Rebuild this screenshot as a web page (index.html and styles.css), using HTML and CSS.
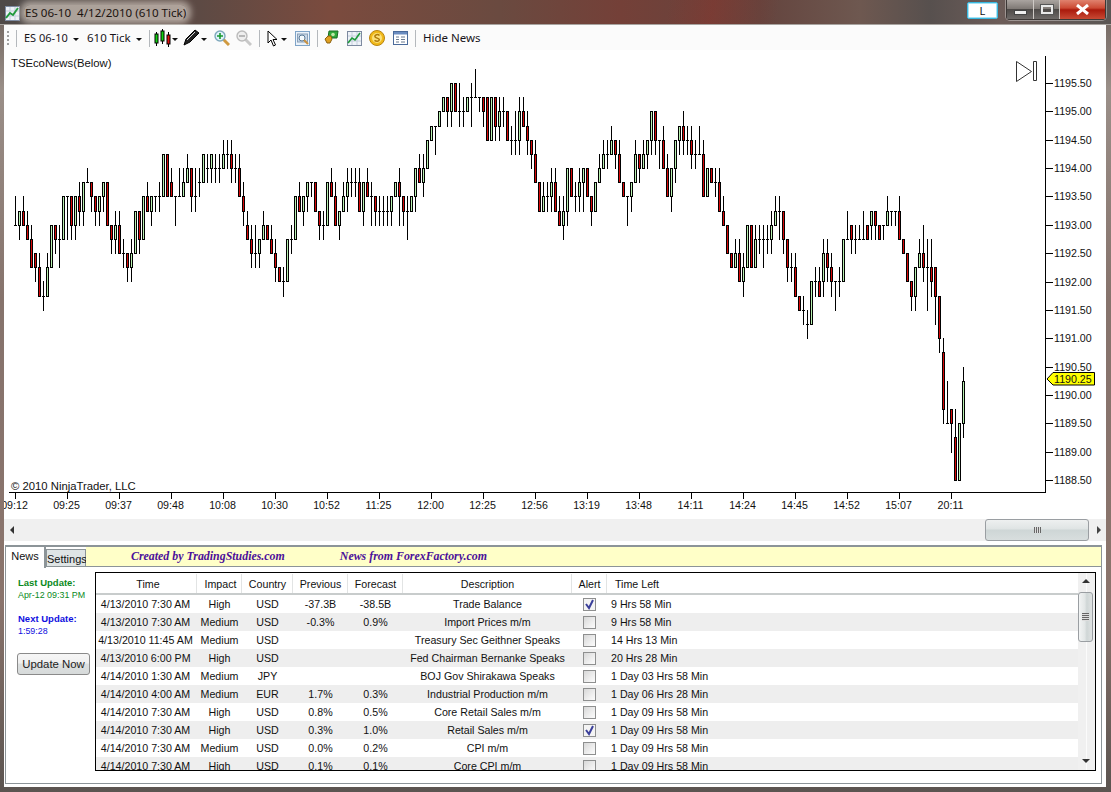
FILE: index.html
```html
<!DOCTYPE html>
<html lang="en">
<head>
    <meta charset="UTF-8">
    <title>ES 06-10 4/12/2010 (610 Tick)</title>
    <link rel="stylesheet" href="styles.css">
</head>
<body>
    <div class="window">
        <div class="titlebar">
            <svg class="app-icon" width="15" height="15" viewBox="0 0 15 15">
                <rect x="0.5" y="0.5" width="14" height="14" fill="#eef2f8" stroke="#7d8aa0"/>
                <path d="M1 5h13M1 10h13M5 1v13M10 1v13" stroke="#c4cedc"/>
                <path d="M1 12l4-5 3 2 5-7" fill="none" stroke="#1f9a3c" stroke-width="2"/>
            </svg>
            <span class="title-text">ES 06-10&nbsp; 4/12/2010 (610 Tick)</span>
            <span class="title-l">L</span>
            <div class="caption-buttons">
                <span class="cap cap-min"><i></i></span>
                <span class="cap cap-max"><i></i></span>
                <span class="cap cap-close">
                    <svg width="15" height="11" viewBox="0 0 15 11"><path d="M2 1l11 9M13 1L2 10" stroke="#fff" stroke-width="3"/></svg>
                </span>
            </div>
        </div>

        <div class="toolbar">
            <span class="grip"></span>
            <span class="sep sep-first"></span>
            <span class="tb-text tb-es">ES 06-10</span>
            <span class="caret caret-es"></span>
            <span class="tb-text tb-tick">610 Tick</span>
            <span class="caret caret-tick"></span>
            <span class="sep sep-a"></span>
            <svg class="ic ic-candles" width="17" height="18" viewBox="0 0 17 18">
                <path d="M2.5 3v14M8.500 0v15M14.500 3v15" stroke="#000"/>
                <rect x="1" y="5" width="3" height="9" fill="#10d010" stroke="#000"/>
                <rect x="7" y="2" width="3" height="10" fill="#10d010" stroke="#000"/>
                <rect x="13" y="6" width="3" height="9" fill="#e01010" stroke="#000"/>
            </svg>
            <span class="caret caret-candles"></span>
            <svg class="ic ic-pen" width="17" height="17" viewBox="0 0 17 17">
                <path d="M1 16l2-6L12 1l4 3-9 9z" fill="#222" stroke="#000"/>
                <path d="M4 11l8-8" stroke="#ddd"/>
            </svg>
            <span class="caret caret-pen"></span>
            <svg class="ic ic-zoomin" width="16" height="16" viewBox="0 0 16 16">
                <path d="M9 9l6 6" stroke="#d09a40" stroke-width="3"/>
                <circle cx="6" cy="6" r="5" fill="#dff2fa" stroke="#7fa8bc" stroke-width="1.4"/>
                <path d="M3 6h6M6 3v6" stroke="#1a9a30" stroke-width="1.6"/>
            </svg>
            <svg class="ic ic-zoomout" width="16" height="16" viewBox="0 0 16 16">
                <path d="M9 9l6 6" stroke="#c8c8c8" stroke-width="3"/>
                <circle cx="6" cy="6" r="5" fill="#eee" stroke="#bbb" stroke-width="1.4"/>
                <path d="M3 6h6" stroke="#aaa" stroke-width="1.6"/>
            </svg>
            <span class="sep sep-b"></span>
            <svg class="ic ic-cursor" width="11" height="17" viewBox="0 0 11 17">
                <path d="M1 1v12l3-3 2.500 6 2-1-2.500-5.500H10z" fill="#fff" stroke="#000"/>
            </svg>
            <span class="caret caret-cursor"></span>
            <svg class="ic ic-props" width="15" height="15" viewBox="0 0 15 15">
                <rect x="0.5" y="0.5" width="14" height="14" fill="#eaf2fa" stroke="#7fa4c8"/>
                <rect x="2.500" y="3" width="10" height="8" fill="#c8d8e8" stroke="#8aa0b8"/>
                <circle cx="7" cy="7" r="3" fill="#f4fafd" stroke="#5a7a98"/>
                <path d="M9 9l4 4" stroke="#c89040" stroke-width="2"/>
            </svg>
            <span class="sep sep-c"></span>
            <svg class="ic ic-money" width="15" height="15" viewBox="0 0 15 15">
                <path d="M5 1h9l-1 7H4z" fill="#2fa83a" stroke="#1a6a24"/>
                <circle cx="9" cy="4.500" r="1.800" fill="#bfe8a8"/>
                <path d="M1 9l3-3h3l1 3-2 4H3z" fill="#e0a020" stroke="#8a6010"/>
            </svg>
            <svg class="ic ic-linechart" width="15" height="15" viewBox="0 0 15 15">
                <rect x="0.5" y="0.5" width="14" height="14" fill="#eef2f8" stroke="#7d8aa0"/>
                <path d="M1 5h13M1 10h13M5 1v13M10 1v13" stroke="#c4cedc"/>
                <path d="M1 12l4-5 3 2 5-7" fill="none" stroke="#1f9a3c" stroke-width="1.600"/>
            </svg>
            <svg class="ic ic-coin" width="16" height="16" viewBox="0 0 16 16">
                <circle cx="8" cy="8" r="7.500" fill="#f0b818" stroke="#b88410"/>
                <circle cx="8" cy="8" r="5" fill="#fbe07a"/>
                <path d="M10.500 5.500C9 4 5.500 4.500 6 6.800c.4 1.700 4.500 1 4.300 3-.2 2-3.300 1.800-4.800.6" fill="none" stroke="#b07a08" stroke-width="1.500"/>
            </svg>
            <svg class="ic ic-table" width="15" height="14" viewBox="0 0 15 14">
                <rect x="0.5" y="0.5" width="14" height="13" fill="#fff" stroke="#4a6a9a"/>
                <rect x="1" y="1" width="13" height="2.500" fill="#6a8cc0"/>
                <path d="M3 6h3M3 8.500h3M3 11h3M8 6h4M8 8.500h4M8 11h4" stroke="#6a7a90"/>
            </svg>
            <span class="sep sep-d"></span>
            <span class="tb-text tb-hide">Hide News</span>
        </div>

        <svg id="chart" class="chart" width="1102" height="467" viewBox="4 50 1102 467"></svg>

        <div class="hscroll">
            <span class="arrow-left"></span>
            <span class="hthumb"><i></i></span>
            <span class="arrow-right"></span>
        </div>

        <div class="panel">
            <div class="tabs">
                <span class="tab tab-active">News</span>
                <span class="tab">Settings</span>
                <div class="banner">
                    <span class="banner-a">Created by TradingStudies.com</span>
                    <span class="banner-b">News from ForexFactory.com</span>
                </div>
            </div>
            <div class="news-body">
                <div class="side">
                    <div class="upd-label green">Last Update:</div>
                    <div class="upd-value green">Apr-12 09:31 PM</div>
                    <div class="upd-label blue next">Next Update:</div>
                    <div class="upd-value blue">1:59:28</div>
                    <button class="update-btn">Update Now</button>
                </div>
                <div class="grid-box">
                    <div class="grid-main">
                        <table class="news">
                            <thead>
                                <tr>
                                    <th>Time</th><th>Impact</th><th>Country</th><th>Previous</th><th>Forecast</th><th>Description</th><th>Alert</th><th class="left">Time Left</th>
                                </tr>
                            </thead>
                            <tbody>
                                <tr><td>4/13/2010 7:30 AM</td><td>High</td><td>USD</td><td>-37.3B</td><td>-38.5B</td><td>Trade Balance</td><td><span class="check on"><svg width="11" height="11" viewBox="0 0 11 11"><path d="M2 5l3 4 4-8" fill="none" stroke="#3a3f9a" stroke-width="2"/></svg></span></td><td class="left">9 Hrs 58 Min</td></tr>
                                <tr><td>4/13/2010 7:30 AM</td><td>Medium</td><td>USD</td><td>-0.3%</td><td>0.9%</td><td>Import Prices m/m</td><td><span class="check"></span></td><td class="left">9 Hrs 58 Min</td></tr>
                                <tr><td>4/13/2010 11:45 AM</td><td>Medium</td><td>USD</td><td></td><td></td><td>Treasury Sec Geithner Speaks</td><td><span class="check"></span></td><td class="left">14 Hrs 13 Min</td></tr>
                                <tr><td>4/13/2010 6:00 PM</td><td>High</td><td>USD</td><td></td><td></td><td>Fed Chairman Bernanke Speaks</td><td><span class="check"></span></td><td class="left">20 Hrs 28 Min</td></tr>
                                <tr><td>4/14/2010 1:30 AM</td><td>Medium</td><td>JPY</td><td></td><td></td><td>BOJ Gov Shirakawa Speaks</td><td><span class="check"></span></td><td class="left">1 Day 03 Hrs 58 Min</td></tr>
                                <tr><td>4/14/2010 4:00 AM</td><td>Medium</td><td>EUR</td><td>1.7%</td><td>0.3%</td><td>Industrial Production m/m</td><td><span class="check"></span></td><td class="left">1 Day 06 Hrs 28 Min</td></tr>
                                <tr><td>4/14/2010 7:30 AM</td><td>High</td><td>USD</td><td>0.8%</td><td>0.5%</td><td>Core Retail Sales m/m</td><td><span class="check"></span></td><td class="left">1 Day 09 Hrs 58 Min</td></tr>
                                <tr><td>4/14/2010 7:30 AM</td><td>High</td><td>USD</td><td>0.3%</td><td>1.0%</td><td>Retail Sales m/m</td><td><span class="check on"><svg width="11" height="11" viewBox="0 0 11 11"><path d="M2 5l3 4 4-8" fill="none" stroke="#3a3f9a" stroke-width="2"/></svg></span></td><td class="left">1 Day 09 Hrs 58 Min</td></tr>
                                <tr><td>4/14/2010 7:30 AM</td><td>Medium</td><td>USD</td><td>0.0%</td><td>0.2%</td><td>CPI m/m</td><td><span class="check"></span></td><td class="left">1 Day 09 Hrs 58 Min</td></tr>
                                <tr><td>4/14/2010 7:30 AM</td><td>High</td><td>USD</td><td>0.1%</td><td>0.1%</td><td>Core CPI m/m</td><td><span class="check"></span></td><td class="left">1 Day 09 Hrs 58 Min</td></tr>
                            </tbody>
                        </table>
                    </div>
                    <div class="vscroll">
                        <span class="arrow-up"></span>
                        <span class="vthumb"><i></i></span>
                        <span class="arrow-down"></span>
                    </div>
                </div>
            </div>
        </div>
    </div>
    <script src="chart.js"></script>
</body>
</html>
```

FILE: styles.css
```css
body {
    margin: 0;
    width: 1111px;
    height: 792px;
    overflow: hidden;
    font-family: "Liberation Sans", Arial, sans-serif;
    font-size: 10.67px;
    color: #111;
    background: linear-gradient(180deg, #6b5f5a 0, #9a8f88 90px, #86736c 300px, #8a746c 600px, #5b5450 100%);
}

.window {
    display: flex;
    flex-direction: column;
    height: 792px;
}

/* title bar */
.titlebar {
    display: flex;
    align-items: flex-start;
    height: 24px;
    border-bottom: 1px solid #a8a4a0;
    background:
        linear-gradient(100deg, transparent 60%, rgba(170, 40, 30, 0.25) 64%, transparent 70%),
        linear-gradient(90deg, #4f4a48 0, #5d4a44 200px, #7b4b3e 330px, #6a4a40 500px, #744038 620px, #64443e 760px, #6e5850 860px, #57504e 930px, #6c5c58 1000px, #5a5654 100%);
}

.app-icon {
    margin: 6px 0 0 5px;
    flex: none;
}

.title-text {
    margin: 5px 0 0 4px;
    padding: 0 1px;
    font-family: "Noto Sans", sans-serif;
    font-size: 11.6px;
    line-height: 15px;
    color: #1c1410;
    background: rgba(226, 216, 206, 0.62);
    border-radius: 6px;
    box-shadow: 0 0 6px 4px rgba(226, 216, 206, 0.62);
    white-space: nowrap;
}

.title-l {
    margin: 2px 0 0 auto;
    width: 29px;
    height: 15px;
    border: 1px solid #38b8e0;
    box-shadow: inset 0 0 0 1px #a8e4f4;
    border-radius: 2px;
    background: #fff;
    font-family: "Noto Sans", sans-serif;
    font-size: 11px;
    line-height: 15px;
    text-align: center;
}

.caption-buttons {
    display: flex;
    margin: 0 5px 0 8px;
    height: 19px;
    border: 1px solid #3c3836;
    border-top: 0;
    border-radius: 0 0 4px 4px;
    box-shadow: 0 0 0 1px rgba(255, 255, 255, 0.35);
}

.cap {
    display: flex;
    align-items: center;
    justify-content: center;
    height: 19px;
    border-right: 1px solid #cfcac6;
    background: linear-gradient(180deg, #aaa4a0 0, #807a76 45%, #4e4a48 50%, #6e6a68 100%);
}

.cap-min {
    width: 26px;
}

.cap-min i {
    width: 11px;
    height: 3px;
    margin-top: 6px;
    background: #eee;
    border: 1px solid #444;
}

.cap-max {
    width: 25px;
}

.cap-max i {
    width: 8px;
    height: 5px;
    border: 2px solid #e8e8e8;
    outline: 1px solid #555;
}

.cap-close {
    width: 45px;
    border-right: 0;
    background: linear-gradient(180deg, #e0826e 0, #cc4a34 42%, #aa1a0c 52%, #c84a34 100%);
}

/* toolbar */
.toolbar {
    position: relative;
    margin: 0 5px 0 4px;
    height: 25px;
    background: #fbfbfb;
    flex: none;
}

.toolbar > * {
    position: absolute;
}

.grip {
    left: 3px;
    top: 6px;
    width: 2px;
    height: 15px;
    background: repeating-linear-gradient(180deg, #a0a0a0 0, #a0a0a0 2px, transparent 2px, transparent 4px);
}

.sep {
    top: 5px;
    width: 1px;
    height: 17px;
    background: #b4b8bc;
}

.sep-first { left: 12px; }
.sep-a { left: 145px; }
.sep-b { left: 255px; }
.sep-c { left: 313px; }
.sep-d { left: 411px; }

.tb-text {
    top: 5px;
    font-family: "Noto Sans", sans-serif;
    font-size: 11.5px;
    line-height: 16px;
    color: #18141a;
    white-space: nowrap;
}

.tb-es { left: 20px; font-size: 11px; }
.tb-tick { left: 83px; }
.tb-hide { left: 419px; }

.caret {
    top: 13px;
    border: 3px solid transparent;
    border-top: 3px solid #111;
    border-bottom: 0;
}

.caret-es { left: 69px; }
.caret-tick { left: 132px; }
.caret-candles { left: 168px; }
.caret-pen { left: 197px; }
.caret-cursor { left: 277px; }

.ic-candles { left: 150px; top: 4px; }
.ic-pen { left: 179px; top: 4px; }
.ic-zoomin { left: 210px; top: 5px; }
.ic-zoomout { left: 232px; top: 5px; }
.ic-cursor { left: 263px; top: 5px; }
.ic-props { left: 291px; top: 6px; }
.ic-money { left: 320px; top: 5px; }
.ic-linechart { left: 343px; top: 6px; }
.ic-coin { left: 365px; top: 5px; }
.ic-table { left: 389px; top: 6px; }

/* chart */
.chart {
    display: block;
    flex: none;
    margin-left: 4px;
    background: #fff;
}

.chart text {
    font-family: "Liberation Sans", Arial, sans-serif;
    font-size: 10.67px;
    fill: #111;
}

.chart text.note {
    font-size: 11.3px;
}

.wick { fill: #000; }
.body-up { fill: #b8f0b0; stroke: #000; }
.body-down { fill: #d80808; stroke: #000; }
.axis { fill: #000; }
.marker { fill: none; stroke: #333; }
.flag { fill: #ffff00; stroke: #000; }

/* horizontal scroll */
.hscroll {
    display: flex;
    align-items: center;
    flex: none;
    margin: 0 5px 0 4px;
    height: 28px;
    background: linear-gradient(180deg, #fff 0, #fff 2px, #f0f0f0 2px, #f0f0f0 24px, #fff 24px);
}

.arrow-left {
    margin: 0 0 2px 6px;
    border: 4px solid transparent;
    border-right: 4px solid #333;
    border-left: 0;
}

.arrow-right {
    margin: 0 5px 2px 8px;
    border: 4px solid transparent;
    border-left: 4px solid #444;
    border-right: 0;
}

.hthumb {
    display: flex;
    justify-content: center;
    align-items: center;
    margin: 0 0 2px auto;
    width: 102px;
    height: 20px;
    border: 1px solid #9a9ea2;
    border-radius: 3px;
    background: linear-gradient(180deg, #eef0f0 0, #dfe4e4 45%, #ced6d6 50%, #d8dede 100%);
}

.hthumb i {
    width: 7px;
    height: 6px;
    background: repeating-linear-gradient(90deg, #666 0, #666 1px, #ddd 1px, #ddd 2px);
}

/* news panel */
.panel {
    display: flex;
    flex-direction: column;
    flex: none;
    margin: 0 9px 0 5px;
    height: 239px;
    border: 1px solid #8c9498;
    border-top: 2px solid #8c9498;
    background: #fff;
    box-sizing: border-box;
    box-shadow: 4px 0 0 #fff, -1px 0 0 #fff, 4px 3px 0 #fff, -1px 3px 0 #fff;
}

.tabs {
    display: flex;
    flex: none;
    height: 20px;
}

.tab {
    box-sizing: border-box;
    width: 40px;
    margin-top: 2px;
    height: 18px;
    border: 1px solid #8c9498;
    background: #dfe5e5;
    font-size: 11px;
    line-height: 18px;
    text-align: center;
}

.tab-active {
    margin-top: 0;
    height: 21px;
    border-top: 0;
    border-left: 0;
    border-right: 2px solid #8c9498;
    border-bottom: 0;
    background: #fff;
    line-height: 19px;
    position: relative;
}

.banner {
    flex: 1;
    height: 19px;
    border-bottom: 1px solid #8c9498;
    background: #ffffc8;
    font-family: "Liberation Serif", "Times New Roman", serif;
    font-weight: bold;
    font-style: italic;
    font-size: 11.9px;
    line-height: 18px;
    color: #4b0f9a;
    white-space: nowrap;
}

.banner-a {
    margin-left: 45px;
}

.banner-b {
    margin-left: 52px;
}

.news-body {
    display: flex;
    flex: 1;
    min-height: 0;
    padding: 5px 5px 12px 0;
}

.side {
    width: 89px;
    flex: none;
    padding: 4px 0 0 12px;
    box-sizing: border-box;
    font-size: 9.5px;
    line-height: 13px;
}

.upd-label {
    font-weight: bold;
}

.upd-value {
    font-size: 8.9px;
}

.next {
    margin-top: 10px;
}

.green { color: #0a8a1c; }
.blue { color: #1010e0; }

.update-btn {
    display: block;
    margin: 15px 0 0 -1px;
    padding: 0;
    width: 73px;
    height: 22px;
    border: 1px solid #8a8a8a;
    border-radius: 3px;
    background: linear-gradient(180deg, #f6f6f6 0, #f0f0f0 45%, #dde0e0 50%, #d6dada 100%);
    font-family: "Liberation Sans", Arial, sans-serif;
    font-size: 11.4px;
    color: #222;
}

.grid-box {
    display: flex;
    flex: 1;
    min-width: 0;
    border: 1px solid #000;
    overflow: hidden;
}

.grid-main {
    flex: 1;
    min-width: 0;
    overflow: hidden;
    padding-top: 1px;
}

.news {
    width: 982px;
    border-collapse: collapse;
    table-layout: fixed;
}

.news th {
    height: 20px;
    padding: 0;
    font-weight: normal;
    text-align: center;
    border-bottom: 2px solid #c8cccc;
    box-sizing: border-box;
    background: linear-gradient(90deg, transparent calc(100% - 1px), #e2e4e4 calc(100% - 1px));
}

.news td {
    height: 18px;
    padding: 0;
    text-align: center;
    white-space: nowrap;
}

.news td:first-child {
    padding-right: 2px;
}

.news th:first-child {
    padding-left: 3px;
}

.news th:nth-child(2) {
    padding-left: 2px;
}

.news .left {
    text-align: left;
    padding-left: 4px;
}

.news th.left {
    padding-left: 8px;
    background: none;
}

.news tr:nth-child(even) td {
    background: #eeeeee;
}

.news th:nth-child(1) { width: 101px; }
.news th:nth-child(2) { width: 45px; }
.news th:nth-child(3) { width: 51px; }
.news th:nth-child(4) { width: 55px; }
.news th:nth-child(5) { width: 55px; }
.news th:nth-child(6) { width: 169px; }
.news th:nth-child(7) { width: 35px; }

.check {
    display: inline-flex;
    justify-content: center;
    align-items: center;
    box-sizing: border-box;
    width: 13px;
    height: 13px;
    vertical-align: middle;
    border: 1px solid #8e8f8f;
    background: linear-gradient(135deg, #d8d8d8 0, #f2f2f2 70%, #fbfbfb 100%);
}

.check.on {
    background: #f4f4f4;
}

.vscroll {
    position: relative;
    flex: none;
    width: 17px;
    background: linear-gradient(90deg, #f0f0f0 0, #f0f0f0 8px, #fbfbfb 8px, #fbfbfb 9px, #f0f0f0 9px);
}

.arrow-up,
.arrow-down {
    position: absolute;
    left: 4px;
    border: 4px solid transparent;
}

.arrow-up {
    top: 6px;
    border-bottom: 4px solid #333;
    border-top: 0;
}

.arrow-down {
    bottom: 7px;
    border-top: 4px solid #333;
    border-bottom: 0;
}

.vthumb {
    position: absolute;
    top: 19px;
    left: 0;
    display: flex;
    align-items: center;
    justify-content: center;
    box-sizing: border-box;
    width: 15px;
    height: 50px;
    border: 1px solid #9a9ea2;
    border-radius: 3px;
    background: linear-gradient(90deg, #f2f4f4 0, #e2e6e6 45%, #cfd6d6 60%, #dfe2e2 100%);
}

.vthumb i {
    width: 7px;
    height: 8px;
    background: repeating-linear-gradient(180deg, #666 0, #666 1px, #ddd 1px, #ddd 2px);
}
```

FILE: chart.js
```js
// each bar: high low open close, in quarter points above 1188.50
const bars = [
    [20,18,18,18],[19,17,18,19],[20,18,19,18],[19,17,18,17],[18,15,17,15],[16,14,16,15],[16,13,15,13],[14,12,13,13],
    [16,13,13,15],[18,15,15,18],[18,16,18,17],[18,15,17,17],[20,17,17,20],[20,17,20,20],[20,17,20,18],[20,17,18,20],
    [21,18,20,19],[21,18,19,21],[22,21,21,21],[21,19,21,20],[20,18,20,19],[20,18,19,20],[21,19,20,21],[21,18,21,18],
    [18,16,18,17],[19,16,17,18],[19,16,18,16],[17,15,16,16],[16,14,16,15],[17,14,15,16],[19,16,16,19],[19,16,19,17],
    [20,17,17,20],[21,19,20,19],[20,18,19,20],[20,19,20,20],[21,19,20,20],[23,20,20,23],[23,20,23,20],[22,20,21,20],
    [20,18,20,20],[22,20,20,20],[22,20,20,21],[23,21,21,22],[22,19,22,20],[22,19,20,20],[22,20,21,21],[23,21,21,23],
    [23,21,22,22],[23,21,22,23],[23,21,22,22],[23,21,22,22],[24,22,22,23],[24,22,23,23],[24,21,23,22],[23,21,22,22],
    [23,20,22,20],[21,18,20,19],[19,17,18,17],[18,15,17,16],[18,15,16,16],[17,15,16,17],[19,17,17,18],[18,17,18,17],
    [18,16,17,16],[17,14,16,15],[15,14,15,14],[15,13,14,14],[17,14,14,17],[18,16,17,17],[20,17,17,20],[21,19,20,19],
    [20,18,19,20],[21,19,20,21],[21,20,21,21],[21,19,21,19],[19,17,19,18],[19,17,18,18],[21,18,18,21],[22,20,21,20],
    [21,18,20,18],[19,17,18,19],[21,19,19,20],[22,19,20,21],[22,20,21,21],[22,20,21,21],[22,19,21,19],[21,18,19,21],
    [22,20,21,20],[21,18,20,20],[20,18,20,19],[20,18,19,19],[20,18,19,19],[20,18,19,19],[20,18,19,20],[21,20,20,21],
    [22,18,21,20],[20,18,20,19],[20,17,19,19],[20,19,19,20],[22,19,20,22],[23,21,22,21],[23,20,21,22],[24,22,22,24],
    [25,24,24,25],[25,23,25,25],[26,25,25,26],[27,26,26,27],[27,25,27,26],[28,25,26,28],[28,26,28,26],[28,25,26,26],
    [27,25,26,26],[27,26,26,27],[28,25,27,27],[29,27,27,27],[27,26,27,27],[27,25,27,26],[27,24,27,24],[27,24,24,27],
    [27,24,27,25],[27,24,25,26],[27,25,26,26],[26,24,26,24],[25,23,24,24],[26,23,24,24],[27,23,24,26],[27,25,26,25],
    [26,23,25,24],[24,22,24,23],[24,21,23,21],[21,19,21,19],[21,19,19,20],[21,19,20,20],[22,19,20,21],[22,19,21,19],
    [20,18,19,18],[20,17,18,19],[22,18,19,22],[22,20,22,20],[21,19,20,20],[22,19,20,21],[22,19,21,22],[22,20,22,20],
    [20,18,20,19],[21,19,19,21],[23,21,21,22],[24,22,22,23],[24,22,23,23],[25,23,23,24],[24,22,24,23],[24,21,23,21],
    [21,20,21,20],[20,18,20,20],[21,19,20,21],[24,21,21,23],[23,21,23,22],[24,22,22,23],[24,22,23,24],[26,23,24,26],
    [26,23,26,24],[24,22,24,24],[25,22,24,22],[23,20,22,20],[22,19,20,22],[24,21,22,24],[25,23,24,25],[26,23,25,24],
    [25,23,24,24],[25,22,24,23],[24,22,23,23],[25,23,23,23],[24,20,23,20],[22,20,20,22],[22,21,22,21],[22,20,21,21],
    [22,19,21,19],[20,18,19,18],[18,16,18,16],[16,15,16,15],[17,15,15,16],[17,14,16,14],[16,13,14,15],[18,15,15,18],
    [18,15,18,15],[18,15,15,17],[18,16,17,17],[18,15,17,17],[18,16,17,17],[19,16,17,18],[20,18,18,19],[20,17,19,19],
    [19,16,19,17],[17,14,17,15],[16,14,15,15],[16,13,15,13],[13,12,13,12],[13,11,12,12],[12,10,11,11],[14,11,11,14],
    [15,13,14,14],[15,13,14,13],[17,13,14,16],[17,14,16,15],[16,13,15,14],[14,12,14,14],[15,13,14,14],[17,14,14,17],
    [19,17,17,17],[18,16,18,17],[18,16,17,17],[18,17,17,17],[19,17,17,17],[18,17,18,17],[19,17,18,19],[19,17,19,18],
    [18,17,18,17],[18,17,18,18],[20,18,18,19],[19,18,19,19],[19,18,19,19],[20,17,19,17],[17,16,17,16],[16,14,16,14],
    [14,12,14,13],[15,12,13,15],[17,15,15,16],[18,14,16,15],[17,12,15,15],[17,13,15,14],[15,11,15,13],[13,9,13,10],
    [10,4,9,5],[7,4,4,4],[5,2,5,4],[5,0,3,0],[4,0,0,4],[8,3,4,7]
];

const timeLabels = ['09:12','09:25','09:37','09:48','10:08','10:30','10:52','11:25','12:00','12:25','12:56','13:19','13:48','14:11','14:24','14:45','14:52','15:07','20:11'];

const chart = document.getElementById('chart');
const NS = 'http://www.w3.org/2000/svg';

function add(tag, attrs, text) {
    const el = document.createElementNS(NS, tag);
    for (const key in attrs) el.setAttribute(key, attrs[key]);
    if (text) el.textContent = text;
    chart.appendChild(el);
    return el;
}

function levelY(level) {
    return Math.round(480 - level * 14.18);
}

bars.forEach((bar, i) => {
    const x = 15 + i * 4;
    const [high, low, open, close] = bar;
    add('rect', { class: 'wick', x: x, y: levelY(high), width: 1, height: levelY(low) - levelY(high) + 1 });
    if (open === close) {
        add('rect', { class: 'wick', x: x - 1, y: levelY(open), width: 3, height: 1 });
    } else {
        const top = levelY(Math.max(open, close));
        const bottom = levelY(Math.min(open, close));
        add('rect', { class: close > open ? 'body-up' : 'body-down', x: x - 0.5, y: top + 0.5, width: 2, height: bottom - top });
    }
});

// axes
add('rect', { class: 'axis', x: 1045, y: 56, width: 1, height: 437 });
add('rect', { class: 'axis', x: 9, y: 492, width: 1037, height: 1 });

timeLabels.forEach((label, i) => {
    const x = 15 + i * 52;
    add('rect', { class: 'axis', x: x, y: 493, width: 1, height: 6 });
    add('text', { x: x - 0.5, y: 509, 'text-anchor': 'middle' }, label);
});

for (let i = 0; i < 15; i++) {
    const y = Math.round(83 + i * 28.36);
    add('rect', { class: 'axis', x: 1046, y: y, width: 7, height: 1 });
    add('text', { x: 1054, y: y + 4 }, (1195.5 - i * 0.5).toFixed(2));
}

add('text', { class: 'note', x: 11, y: 67 }, 'TSEcoNews(Below)');
add('text', { class: 'note', x: 11, y: 490 }, '\u00a9 2010 NinjaTrader, LLC');

// end-of-chart marker
add('path', { class: 'marker', d: 'M1016.5 61.500v20l15-10zM1033.500 61.500h3v19h-3z' });

// last price flag
add('path', { class: 'flag', d: 'M1047 379l6-6.500h41.500v12.500H1053z' });
add('text', { x: 1054, y: 383 }, '1190.25');
```
